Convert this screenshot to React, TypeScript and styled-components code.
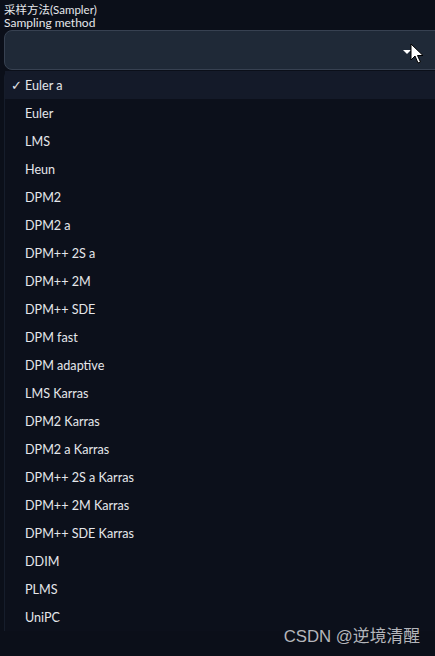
import React from "react";
import styled, { createGlobalStyle } from "styled-components";

const Global = createGlobalStyle`
  html, body { margin: 0; padding: 0; background: #0b0f19; }
  body { font-family: Lato, "Noto Sans", "Noto Sans CJK SC", sans-serif; }
`;

const Page = styled.div`
  position: relative;
  width: 435px;
  height: 656px;
  overflow: hidden;
  background: #0b0f19;
  padding: 4px 0 0 4px;
  box-sizing: border-box;
  display: flex;
  flex-direction: column;
`;

const LabelBlock = styled.div`
  display: flex;
  flex-direction: column;
  color: #e5e7eb;
  font-size: 12px;
  line-height: 12.5px;
  font-family: Lato, "Noto Sans CJK SC", sans-serif;
`;

const CjkLine = styled.span`
  font-size: 11.5px;
`;

const SelectBox = styled.div`
  margin-top: 1px;
  height: 40px;
  width: 440px;
  flex-shrink: 0;
  box-sizing: border-box;
  background: #1f2937;
  border: 1px solid #374151;
  border-radius: 8px;
  display: flex;
  align-items: center;
  padding-left: 398px;
`;

const IndicatorWrap = styled.div`
  position: relative;
  display: flex;
  align-items: center;
  padding-top: 4px;
`;

const Caret = styled.div`
  width: 0;
  height: 0;
  border-left: 4px solid transparent;
  border-right: 4px solid transparent;
  border-top: 4px solid #ffffff;
`;

const Cursor = styled.svg`
  position: absolute;
  left: 7px;
  top: -3px;
`;

const List = styled.ul`
  list-style: none;
  margin: 1px 0 0 0;
  padding: 0;
  width: 440px;
  display: flex;
  flex-direction: column;
  background: #0c101b;
  border-left: 1px solid #161d2b;
  border-radius: 6px 0 0 0;
`;

const Item = styled.li<{ $selected?: boolean }>`
  height: 28px;
  display: flex;
  align-items: center;
  padding-left: 6px;
  font-size: 12.6px;
  font-family: Lato, sans-serif;
  color: #e5e7eb;
  background: ${(p) => (p.$selected ? "#141a29" : "transparent")};
`;

const Check = styled.span`
  width: 14px;
  flex-shrink: 0;
  font-size: 13px;
  font-family: "DejaVu Sans", sans-serif;
`;

const Watermark = styled.div`
  position: absolute;
  right: 15px;
  bottom: 9px;
  color: #b4b6bb;
  font-size: 16.8px;
  font-family: "Liberation Sans", "Noto Sans CJK SC", sans-serif;
`;

const items = [
  "Euler a", "Euler", "LMS", "Heun", "DPM2", "DPM2 a", "DPM++ 2S a", "DPM++ 2M",
  "DPM++ SDE", "DPM fast", "DPM adaptive", "LMS Karras", "DPM2 Karras",
  "DPM2 a Karras", "DPM++ 2S a Karras", "DPM++ 2M Karras", "DPM++ SDE Karras",
  "DDIM", "PLMS", "UniPC",
];

export default function App() {
  return (
    <>
      <Global />
      <Page>
        <LabelBlock>
          <CjkLine>采样方法(Sampler)</CjkLine>
          <span>Sampling method</span>
        </LabelBlock>
        <SelectBox>
          <IndicatorWrap>
            <Caret />
            <Cursor width="14" height="22" viewBox="0 0 14 22">
              <path d="M1 1 L1 17 L5 13 L8 20 L10.5 19 L7.5 12.5 L13 12.5 Z" fill="#fff" stroke="#000" strokeWidth="1" />
            </Cursor>
          </IndicatorWrap>
        </SelectBox>
        <List>
          {items.map((it, i) => (
            <Item key={it} $selected={i === 0}>
              <Check>{i === 0 ? "✓" : ""}</Check>
              {it}
            </Item>
          ))}
        </List>
        <Watermark>CSDN @逆境清醒</Watermark>
      </Page>
    </>
  );
}
